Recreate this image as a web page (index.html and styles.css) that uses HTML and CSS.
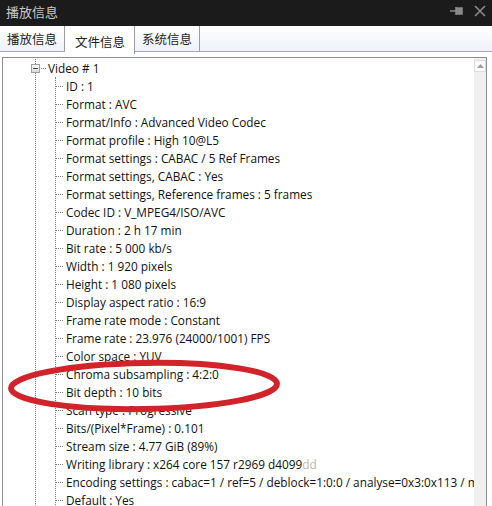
FILE: index.html
```html
<!DOCTYPE html>
<html lang="zh-CN">
<head>
  <meta charset="UTF-8">
  <title>播放信息</title>
  <link rel="stylesheet" href="styles.css">
</head>
<body>
  <div class="window">
    <div class="titlebar">
      <span class="title">播放信息</span>
      <div class="title-btns">
        <svg width="14" height="12" viewBox="0 0 14 12"><path d="M0 6h6M6 2v8M6 3h6v6H6" stroke="#8a8a8a" stroke-width="1.6" fill="#8a8a8a"/></svg>
        <svg width="12" height="12" viewBox="0 0 12 12"><path d="M1 1l10 10M11 1L1 11" stroke="#8a8a8a" stroke-width="1.6"/></svg>
      </div>
    </div>

    <div class="tabs">
      <div class="tab">播放信息</div>
      <div class="tab active">文件信息</div>
      <div class="tab">系统信息</div>
    </div>

    <div class="body">
      <div class="panel">
        <div class="tree">
          <div class="root">
            <div class="node-head"><span class="expander"></span><span class="dots"></span>Video # 1</div>
            <ul class="children">
              <li>ID : 1</li>
              <li>Format : AVC</li>
              <li>Format/Info : Advanced Video Codec</li>
              <li>Format profile : High 10@L5</li>
              <li>Format settings : CABAC / 5 Ref Frames</li>
              <li>Format settings, CABAC : Yes</li>
              <li>Format settings, Reference frames : 5 frames</li>
              <li>Codec ID : V_MPEG4/ISO/AVC</li>
              <li>Duration : 2 h 17 min</li>
              <li>Bit rate : 5 000 kb/s</li>
              <li>Width : 1 920 pixels</li>
              <li>Height : 1 080 pixels</li>
              <li>Display aspect ratio : 16:9</li>
              <li>Frame rate mode : Constant</li>
              <li>Frame rate : 23.976 (24000/1001) FPS</li>
              <li>Color space : YUV</li>
              <li>Chroma subsampling : 4:2:0</li>
              <li>Bit depth : 10 bits</li>
              <li>Scan type : Progressive</li>
              <li>Bits/(Pixel*Frame) : 0.101</li>
              <li>Stream size : 4.77 GiB (89%)</li>
              <li>Writing library : x264 core 157 r2969 d4099<span class="faint">dd</span></li>
              <li>Encoding settings : cabac=1 / ref=5 / deblock=1:0:0 / analyse=0x3:0x113 / me</li>
              <li>Default : Yes</li>
            </ul>
          </div>
        </div>
        <div class="scrollbar">
          <div class="scroll-up">
            <svg width="7" height="4" viewBox="0 0 7 4"><path d="M0 4L3.5 0 7 4z" fill="#a0a0a0"/></svg>
          </div>
        </div>
        <svg class="mark" width="290" height="64" viewBox="0 0 290 64">
          <ellipse cx="144" cy="32" rx="133" ry="23" fill="none" stroke="#d2232a" stroke-width="6" transform="rotate(-1 144 32)"/>
        </svg>
      </div>
    </div>
  </div>
</body>
</html>
```

FILE: styles.css
```css
body {
  margin: 0;
  background: #fff;
  font-family: "Open Sans", "Noto Sans", sans-serif;
  overflow: hidden;
}

.window {
  width: 492px;
  height: 506px;
  display: flex;
  flex-direction: column;
}

.titlebar {
  height: 26px;
  background-color: #1b1b1b;
  display: flex;
  align-items: center;
  justify-content: space-between;
  padding: 0 6px 0 6px;
  flex-shrink: 0;
}

.title {
  font-family: "Noto Sans CJK SC", sans-serif;
  font-size: 13px;
  color: #c9c9c9;
  margin-top: -3px;
}

.title-btns {
  display: flex;
  gap: 10px;
  align-items: center;
  margin-top: -4px;
}

.tabs {
  height: 26px;
  flex-shrink: 0;
  display: flex;
  background: linear-gradient(#ffffff, #edf2fa);
  border-bottom: 1px solid #a9a9a9;
  box-sizing: border-box;
}

.tab {
  font-family: "Noto Sans CJK SC", sans-serif;
  font-size: 12.5px;
  color: #222;
  padding: 0 7px 0 7px;
  display: flex;
  align-items: center;
  border-right: 1px solid #9d9d9d;
  height: 25px;
}

.tab.active {
  background: #fff;
  height: 26px;
  padding: 2px 9px 0 10px;
}

.body {
  flex: 1;
  padding: 5px 5px 0 2px;
  min-height: 0;
}

.panel {
  position: relative;
  height: 100%;
  border: 1px solid #8c8d8d;
  border-bottom: none;
  box-sizing: border-box;
  display: flex;
  overflow: hidden;
}

.tree {
  flex: 1;
  overflow: hidden;
  padding: 1px 0 0 32px;
  font-size: 11.8px;
  color: #111;
  white-space: nowrap;
}

.root {
  border-left: 1px dotted #7a7a7a;
  height: 100%;
}

.node-head {
  height: 18px;
  display: flex;
  align-items: center;
  margin-left: -5px;
}

.expander {
  width: 7px;
  height: 7px;
  border: 1px solid #a0a0a0;
  background: linear-gradient(#fafafa, #dcdcdc);
  position: relative;
}

.expander::after {
  content: "";
  position: absolute;
  left: 1px;
  top: 3px;
  width: 5px;
  height: 1px;
  background: #444;
}

.dots {
  width: 5px;
  border-top: 1px dotted #7a7a7a;
  margin: 0 2px 0 1px;
}

.children {
  list-style: none;
  margin: 0 0 0 19px;
  padding: 0;
  border-left: 1px dotted #7a7a7a;
}

.children li {
  height: 18px;
  line-height: 18px;
  display: flex;
  align-items: center;
}

.children li::before {
  content: "";
  width: 7px;
  border-top: 1px dotted #7a7a7a;
  margin-right: 3px;
  flex-shrink: 0;
}

.faint {
  color: #b8b8b8;
}

.scrollbar {
  width: 12px;
  background: #f0f0f0;
  flex-shrink: 0;
  padding-top: 2px;
}

.scroll-up {
  width: 10px;
  height: 10px;
  border: 1px solid #dcdcdc;
  background: #fafafa;
  display: flex;
  align-items: center;
  justify-content: center;
}

.mark {
  position: absolute;
  left: -3px;
  top: 296px;
}
```
